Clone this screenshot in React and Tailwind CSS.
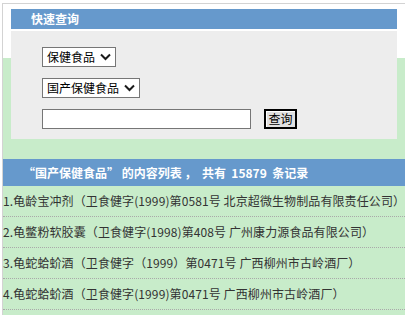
import React from "react";

const Chevron = () => (
  <svg width="11" height="8" viewBox="0 0 11 8" className="shrink-0">
    <path d="M1 1.5 L5.5 6 L10 1.5" fill="none" stroke="#1a1a1a" strokeWidth="2" />
  </svg>
);

const Select = ({ label, w }) => (
  <div
    className={`flex h-[20px] items-center justify-between whitespace-nowrap border border-[#767676] bg-white pl-[4px] pr-[4px] text-[12px] leading-none text-black ${w}`}
  >
    <span>{label}</span>
    <Chevron />
  </div>
);

const rows = [
  "1.龟龄宝冲剂（卫食健字(1999)第0581号 北京超微生物制品有限责任公司）",
  "2.龟鳖粉软胶囊（卫食健字(1998)第408号 广州康力源食品有限公司）",
  "3.龟蛇蛤蚧酒（卫食健字（1999）第0471号 广西柳州市古岭酒厂）",
  "4.龟蛇蛤蚧酒（卫食健字(1999)第0471号 广西柳州市古岭酒厂）",
];

export default function App() {
  return (
    <div
      className="h-[315px] w-[405px] overflow-hidden bg-white pl-[2px] pt-[3px]"
      style={{ fontFamily: '"Noto Sans CJK SC", "Liberation Sans", sans-serif' }}
    >
      <div className="h-full border-l border-t border-[#d3d3d3] bg-[linear-gradient(to_bottom,#ffffff_54px,#c8ecca_54px)]">
        <div className="ml-[8px] mr-[8px] pt-[5px]">
          <div className="flex h-[20px] items-center bg-[#6699cc] pl-[20px] text-[12px] font-bold leading-none text-white">
            快速查询
          </div>
          <div className="mt-[2px] flex h-[108px] flex-col items-start gap-[11px] bg-[#ededed] pl-[31px] pt-[16px]">
            <Select label="保健食品" w="w-[74px]" />
            <Select label="国产保健食品" w="w-[98px]" />
            <div className="flex items-center">
              <div className="h-[20px] w-[209px] border border-[#767676] bg-white" />
              <div className="ml-[13px] flex h-[20px] w-[33px] items-center justify-center border-2 border-black bg-[#e0e0e0] text-[12px] leading-none text-black shadow-[inset_1px_1px_0_#ffffff]">
                查询
              </div>
            </div>
          </div>
        </div>
        <div className="mt-[20px] flex h-[27px] items-center whitespace-pre bg-[#6699cc] pl-[20px] text-[12px] font-bold leading-none text-white">
          {"“国产保健食品” 的内容列表 ，  共有  15879  条记录"}
        </div>
        {rows.map((r) => (
          <div
            key={r}
            className="flex h-[31px] items-center whitespace-nowrap border-b border-dotted border-[#a9a9a9] text-[12px] leading-none tracking-[0.1px] text-[#333333]"
          >
            {r}
          </div>
        ))}
      </div>
    </div>
  );
}
